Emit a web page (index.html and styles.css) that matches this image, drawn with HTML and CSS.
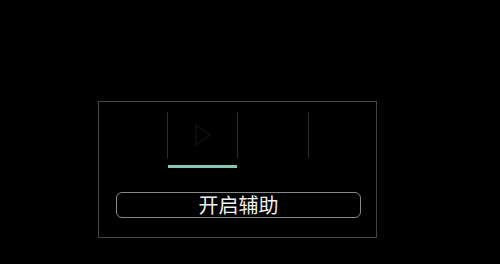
FILE: index.html
```html
<!DOCTYPE html>
<html>
<head>
    <title>开启辅助</title>
    <link rel="stylesheet" href="styles.css">
</head>
<body>
    <div class="panel"> <!-- outlined dialog -->
        <div class="tabs">
            <div class="tab">
                <svg class="tab-icon" width="24" height="26" viewBox="0 0 24 26">
                    <path d="M5 3 L19 13 L5 23 Z" fill="none" stroke="#0c0c0c" stroke-width="2"/>
                </svg>
            </div>
            <div class="tab tab-last"></div>
        </div>
        <div class="indicator"></div>
        <button class="start-btn">开启辅助</button>
    </div>
</body>
</html>
```

FILE: styles.css
```css
body {
    margin: 0;
    background-color: black;
    font-family: "Noto Sans CJK SC", "Noto Sans", sans-serif;
}

.panel {
    margin: 101px 0 0 98px;
    width: 277px;
    height: 135px;
    border: 1px solid #444;
    display: flex;
    flex-direction: column;
}

.tabs {
    display: flex;
    margin: 10px 0 0 68px;
}

.tab {
    width: 69px;
    height: 46px;
    border-left: 1px solid #2c2c2c;
    display: flex;
    align-items: center;
    justify-content: center;
}

.tab-last {
    width: 70px;
    border-right: 1px solid #2c2c2c;
}

.indicator {
    margin: 7px 0 0 69px;
    width: 69px;
    height: 3px;
    background-color: #86c4b3;
}

.start-btn {
    margin: 24px 0 0 17px;
    width: 245px;
    height: 26px;
    padding: 0;
    border: 1px solid #888;
    border-radius: 6px;
    background: black;
    color: #f2f2f2;
    font-family: "Noto Sans CJK SC", "Noto Sans", sans-serif;
    font-size: 20px;
    line-height: 24px;
}
```
